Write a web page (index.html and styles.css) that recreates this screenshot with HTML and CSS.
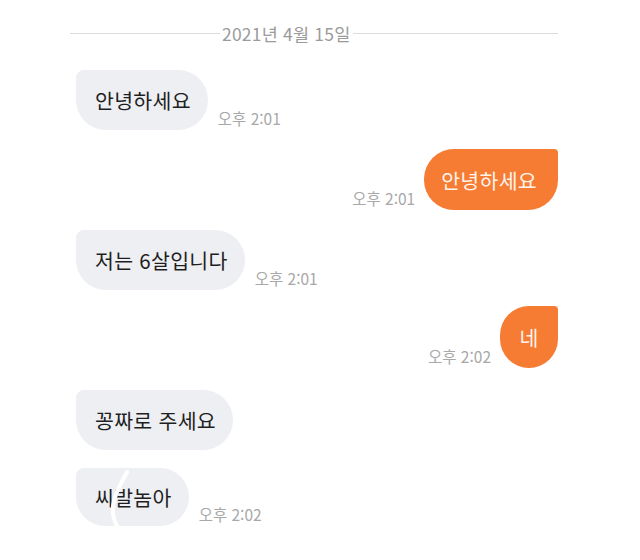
FILE: index.html
```html
<!DOCTYPE html>
<html lang="ko">
<head>
<meta charset="utf-8">
<link rel="stylesheet" href="styles.css">
</head>
<body>
<div class="chat">
  <div class="date">
    <span class="line line-left"></span>
    <span class="date-text">2021년 4월 15일</span>
    <span class="line line-right"></span>
  </div>

  <div class="row in r1">
    <div class="bubble gray">안녕하세요</div>
    <span class="time">오후 2:01</span>
  </div>

  <div class="row out r2">
    <span class="time">오후 2:01</span>
    <div class="bubble orange">안녕하세요</div>
  </div>

  <div class="row in r3">
    <div class="bubble gray">저는 6살입니다</div>
    <span class="time">오후 2:01</span>
  </div>

  <div class="row out r4">
    <span class="time">오후 2:02</span>
    <div class="bubble orange drop">네</div>
  </div>

  <div class="row in r5">
    <div class="bubble gray">꽁짜로 주세요</div>
  </div>

  <div class="row in r6">
    <div class="bubble gray censored">씨발놈아
      <svg class="scribble" width="40" height="66" viewBox="0 0 40 66">
        <path d="M27 4 C22 14 14 26 13 38 C12 48 15 56 20 63" fill="none" stroke="#ffffff" stroke-width="4" stroke-linecap="round"/>
      </svg>
    </div>
    <span class="time">오후 2:02</span>
  </div>
</div>
</body>
</html>
```

FILE: styles.css
```css
html, body {
  margin: 0;
  padding: 0;
  background: #ffffff;
}
body {
  width: 640px;
  height: 560px;
  overflow: hidden;
  font-family: "Noto Sans CJK KR", "Noto Sans", sans-serif;
}
.chat {
  padding: 21px 82px 0 76px;
  display: flex;
  flex-direction: column;
}
.date {
  display: flex;
  align-items: center;
  margin-left: -6px;
  height: 24px;
}
.line {
  height: 1px;
  background: #dcdcdc;
}
.line-left {
  width: 150px;
}
.line-right {
  flex: 1;
}
.date-text {
  font-size: 17.5px;
  color: #9b9b9b;
  padding: 0 2px;
  letter-spacing: 0.2px;
}
.row {
  display: flex;
  align-items: flex-end;
}
.out {
  justify-content: flex-end;
}
.r1 { margin-top: 25px; }
.r2 { margin-top: 19px; }
.r3 { margin-top: 20px; }
.r4 { margin-top: 16px; }
.r5 { margin-top: 22px; }
.r6 { margin-top: 18px; }
.bubble {
  height: 60px;
  display: flex;
  align-items: center;
  padding: 0 17px 0 19px;
  font-size: 20.5px;
  letter-spacing: 0.3px;
  box-sizing: border-box;
}
.gray {
  background: #eeeff3;
  color: #1f1f1f;
  border-radius: 8px 30px 30px 30px;
}
.orange {
  background: #f67b33;
  color: #fff3ea;
  border-radius: 30px 4px 30px 30px;
  height: 61px;
  padding: 0 21px 0 17px;
}
.drop {
  width: 58px;
  height: 62px;
  justify-content: center;
  padding: 0;
}
.time {
  font-size: 15.5px;
  color: #a8a8a8;
  margin: 0 8px 3px 10px;
  line-height: 17px;
}
.out .time {
  margin: 0 9px 3px 0;
}
.r6 .bubble {
  height: 58px;
}
.censored {
  position: relative;
}
.scribble {
  position: absolute;
  left: 24px;
  top: 0px;
}
```
